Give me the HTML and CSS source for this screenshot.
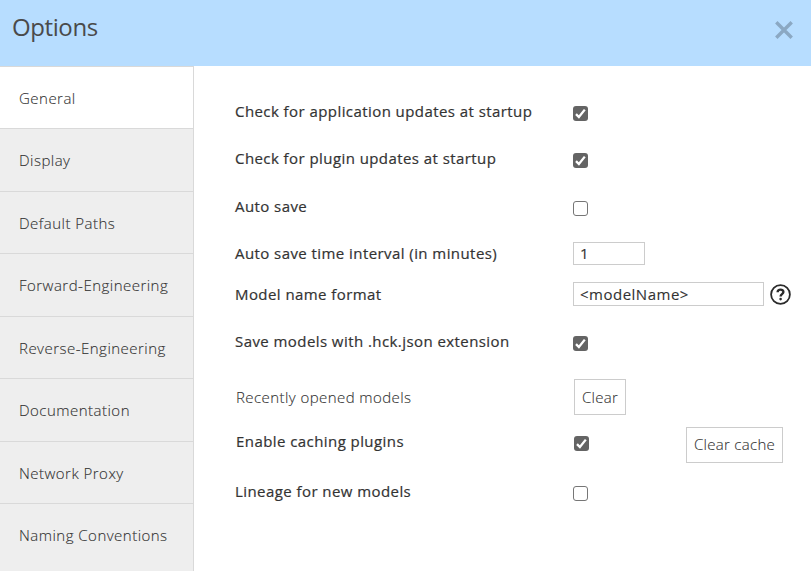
FILE: index.html
```html
<!DOCTYPE html>
<html lang="en">
<head>
<meta charset="utf-8">
<title>Options</title>
<link rel="stylesheet" href="styles.css">
</head>
<body>
<header class="header">
  <h1 class="title">Options</h1>
  <svg class="close" width="20" height="20" viewBox="0 0 20 20"><path d="M2.3 2.3L17.7 17.7M17.7 2.3L2.3 17.7"/></svg>
</header>
<div class="body">
  <nav class="sidebar">
    <a class="tab active"><span>General</span></a>
    <a class="tab"><span>Display</span></a>
    <a class="tab"><span>Default Paths</span></a>
    <a class="tab"><span>Forward-Engineering</span></a>
    <a class="tab"><span>Reverse-Engineering</span></a>
    <a class="tab"><span>Documentation</span></a>
    <a class="tab"><span>Network Proxy</span></a>
    <a class="tab"><span>Naming Conventions</span></a>
  </nav>
  <main class="panel">
    <div class="row"><label>Check for application updates at startup</label><span class="check on"><svg viewBox="0 0 15 15"><path d="M3 8.1L5.9 11L11.8 3.6"/></svg></span></div>
    <div class="row"><label>Check for plugin updates at startup</label><span class="check on"><svg viewBox="0 0 15 15"><path d="M3 8.1L5.9 11L11.8 3.6"/></svg></span></div>
    <div class="row"><label>Auto save</label><span class="check"></span></div>
    <div class="row text"><label>Auto save time interval (in minutes)</label><input class="field short" value="1"></div>
    <div class="row text"><label>Model name format</label><input class="field" value="&lt;modelName&gt;">
      <svg class="help" width="21" height="21" viewBox="0 0 21 21"><circle cx="10.5" cy="10.5" r="9.4"/><path d="M7.6 8.2C7.8 4.7 13.5 4.9 13.4 8C13.3 10.2 10.6 10.1 10.6 12.5"/><circle class="dot" cx="10.6" cy="15.1" r="1.3"/></svg>
    </div>
    <div class="row"><label>Save models with .hck.json extension</label><span class="check on"><svg viewBox="0 0 15 15"><path d="M3 8.1L5.9 11L11.8 3.6"/></svg></span></div>
    <div class="row inset recent"><label>Recently opened models</label><button class="clear">Clear</button></div>
    <div class="row inset caching"><label>Enable caching plugins</label><span class="check on"><svg viewBox="0 0 15 15"><path d="M3 8.1L5.9 11L11.8 3.6"/></svg></span><button class="clear-cache">Clear cache</button></div>
    <div class="row"><label>Lineage for new models</label><span class="check"></span></div>
  </main>
</div>
</body>
</html>
```
FILE: styles.css
```css
* { box-sizing: border-box; }
body {
  margin: 0;
  height: 571px;
  overflow: hidden;
  background: #fff;
  color: #333;
  font-family: "Open Sans", sans-serif;
  font-size: 15px;
}
.header {
  display: flex;
  justify-content: space-between;
  height: 66px;
  padding: 10px 17px 0 12px;
  background: #b7ddff;
}
.title {
  margin: 0;
  font-size: 24px;
  line-height: 34px;
  font-weight: 400;
  letter-spacing: -0.4px;
  color: #4a4a4a;
}
.close { margin-top: 10px; fill: none; stroke: #8ba8c3; stroke-width: 3.4; }
.body { display: flex; height: 505px; }
.sidebar {
  width: 194px;
  display: grid;
  grid-template-rows: 62px 63px 62px 63px 62px 63px 62px 68px;
  border-right: 1px solid #d9d9d9;
}
.tab {
  padding: 19px 0 0 19px;
  border-top: 1px solid #d9d9d9;
  background: #eee;
  line-height: 24px;
  font-weight: 300;
  letter-spacing: 0.48px;
  color: #333;
  -webkit-text-stroke: 0.12px #333;
  white-space: nowrap;
}
.tab.active { background: #fff; }
.panel {
  flex: 1;
  display: grid;
  grid-template-rows: 47px 47px 49px 41px 40px 59px 48px 48px 49px;
  align-content: start;
  padding: 24px 0 0 41px;
}
.row { display: flex; align-items: center; }
.row.inset { padding-left: 1px; }
.row label {
  width: 338px;
  padding-bottom: 6px;
  line-height: 20px;
  font-weight: 500;
  letter-spacing: 0.43px;
  color: #333;
  -webkit-text-stroke: 0.2px #333;
  white-space: nowrap;
}
.row.text label { padding-bottom: 2px; }
.row.recent label { font-weight: 300; padding-bottom: 0; -webkit-text-stroke: 0.12px #333; }
.row.text + .row.text label { padding-bottom: 1px; }
.check {
  width: 15px;
  height: 15px;
  border: 1px solid #767676;
  border-radius: 3px;
  background: #fff;
}
.check.on { border: 0; background: #646464; }
.check svg { display: block; fill: none; stroke: #fff; stroke-width: 2.3; }
.field {
  width: 191px;
  height: 24px;
  padding: 0 6px;
  border: 1px solid #ccc;
  background: #fff;
  color: #333;
  font: 500 15px "Open Sans", sans-serif;
  letter-spacing: 0.5px;
  -webkit-text-stroke: 0.12px #333;
}
.field.short { width: 72px; height: 23px; padding-bottom: 2px; }
.help { margin-left: 6px; fill: none; stroke: #2b2b2b; stroke-width: 1.8; }
.help path { stroke-width: 2.4; }
.help .dot { fill: #2b2b2b; stroke: none; }
button {
  height: 36px;
  padding: 0 0 1px;
  border: 1px solid #ccc;
  background: #fff;
  color: #333;
  font: 300 15px "Open Sans", sans-serif;
  letter-spacing: 0.3px;
  -webkit-text-stroke: 0.12px #333;
}
.clear { width: 52px; padding-bottom: 0; }
.clear-cache { width: 97px; margin-left: 97px; padding-bottom: 2px; }
.caching .check { margin-bottom: 3px; }
.row.caching label { padding-bottom: 8px; }
```
